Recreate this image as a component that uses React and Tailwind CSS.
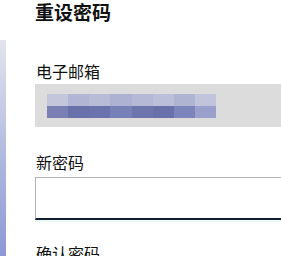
export default function App() {
  const font = { fontFamily: '"Noto Sans CJK SC", "Noto Sans", sans-serif' };
  const top = ["#c4c6dc", "#b2b6d4", "#b9bcd7", "#aeb2d2", "#b6b9d5", "#bcbfd9", "#b0b4d3", "#c2c4dc"];
  const bot = ["#7a80b4", "#6a71aa", "#6c72ab", "#7880b8", "#6e75ad", "#6a70a9", "#7c84bb", "#9aa0cc"];
  return (
    <div className="w-[281px] h-[256px] overflow-hidden bg-white flex items-start text-[#111]" style={font}>
      <div className="w-[6px] mt-[40px] h-[216px] shrink-0 bg-gradient-to-b from-[#e4e4ee] via-[#b4bce0] to-[#8c98d6]" />
      <div className="flex-1 pl-[29px] flex flex-col [&>*]:shrink-0">
        <div className="mt-[1px] text-[19px] leading-[22px] font-bold">重设密码</div>
        <div className="mt-[38px] text-[16px] leading-[20px] pl-[1px]">电子邮箱</div>
        <div className="mt-[3px] h-[43px] bg-[#dcdcdc] flex items-center pl-[12px]">
          <div className="flex flex-col w-[169px] h-[24px]">
            <div className="flex h-[12px]">
              {top.map((c, i) => (
                <div key={i} className="flex-1" style={{ backgroundColor: c }} />
              ))}
            </div>
            <div className="flex h-[12px]">
              {bot.map((c, i) => (
                <div key={i} className="flex-1" style={{ backgroundColor: c }} />
              ))}
            </div>
          </div>
        </div>
        <div className="mt-[25px] text-[16px] leading-[20px] pl-[1px]">新密码</div>
        <div className="mt-[5px] h-[43px] bg-white border-t border-l border-[#b4b4b4] border-b-2 border-b-[#0f1f2c]" />
        <div className="h-[2px] bg-[#eefafa]" />
        <div className="mt-[21px] text-[16px] leading-[20px] pl-[1px]">确认密码</div>
      </div>
    </div>
  );
}
